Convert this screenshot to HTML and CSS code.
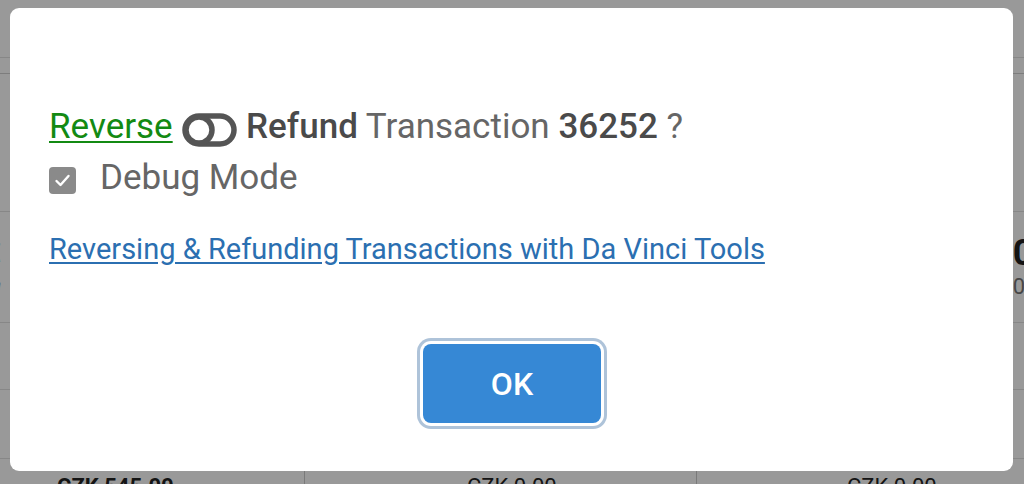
FILE: index.html
```html
<!DOCTYPE html>
<html lang="en">
<head>
<meta charset="utf-8">
<title>Reverse Transaction</title>
<link rel="stylesheet" href="styles.css">
</head>
<body>
<div class="page">
  <div class="topbar"></div>
  <div class="subbar"></div>
  <div class="row row-a"></div>
  <div class="row row-b">
    <div class="cell-left"><span class="cur">€</span><span class="note">ta</span></div>
    <div class="cell-right"><span class="big">00</span><span class="small">00</span></div>
  </div>
  <div class="row row-c"><div class="cell-right"><span class="small">0%</span></div></div>
  <div class="row row-d"><div class="cell-right"><span class="small">0%</span></div></div>
  <div class="row row-e">
    <div class="tcol">CZK 545.00 <span class="arr">▲</span></div>
    <div class="tcol">CZK 0.00 <span class="arr">▲</span></div>
    <div class="tcol">CZK 0.00 <span class="arr">▲</span></div>
  </div>
</div>
<div class="overlay"></div>
<div class="modal" role="dialog">
  <div class="modal-body">
    <p class="title"><a class="rev-link" href="#">Reverse</a> <svg class="toggle" width="55" height="34" viewBox="0 0 55 34" aria-hidden="true"><rect x="3" y="3" width="49" height="28" rx="14" fill="none" stroke="#555" stroke-width="5.5"/><circle cx="17" cy="17" r="13" fill="none" stroke="#555" stroke-width="5.5"/></svg> <b class="strong">Refund</b> Transaction <b class="strong">36252</b> ?</p>
    <label class="debug">
      <span class="checkbox"><svg width="27" height="27" viewBox="0 0 27 27" aria-hidden="true"><path d="M7.5 14l4 4 8-9" fill="none" stroke="#fff" stroke-width="2.4" stroke-linecap="round" stroke-linejoin="round"/></svg></span>
      <span class="debug-text">Debug Mode</span>
    </label>
    <p class="help"><a href="#" class="help-link">Reversing &amp; Refunding Transactions with Da Vinci Tools</a></p>
  </div>
  <div class="modal-footer">
    <button class="ok" type="button">OK</button>
  </div>
</div>
</body>
</html>
```

FILE: styles.css
```css
html, body {
  margin: 0;
  padding: 0;
}
body {
  width: 1024px;
  height: 484px;
  overflow: hidden;
  background: #fff;
  font-family: Roboto, "Liberation Sans", sans-serif;
}

/* background page */
.page {
  width: 1024px;
}
.topbar {
  height: 57px;
  border-bottom: 1px solid #e2e2e2;
}
.subbar {
  height: 15px;
  border-bottom: 1px solid #d0d0d0;
}
.row {
  border-bottom: 1px solid #e2e2e2;
  display: flex;
  justify-content: space-between;
}
.row-a { height: 137px; }
.row-b { height: 110px; }
.row-c { height: 66px; }
.row-d { height: 68px; }
.row-e { height: 40px; border-bottom: 0; }
.cell-left {
  display: flex;
  flex-direction: column;
  margin-left: -14px;
  padding-top: 26px;
}
.cur { font-size: 26px; font-weight: 700; color: #333; }
.note { font-size: 18px; font-style: italic; color: #777; margin-top: 6px; }
.cell-right {
  display: flex;
  flex-direction: column;
  align-items: flex-start;
  margin-left: auto;
  margin-right: -30px;
  padding-top: 20px;
}
.big { font-size: 36px; font-weight: 700; color: #222; }
.small { font-size: 22px; color: #777; }
.row-e {
  display: grid;
  grid-template-columns: 305px 392px 1fr;
}
.tcol {
  padding: 15px 0 0 57px;
  font-weight: 700;
  font-size: 22px;
  color: #222;
  border-right: 1px solid #ccc;
}
.tcol:nth-child(2), .tcol:nth-child(3) { font-weight: 400; padding-left: 162px; }
.tcol:nth-child(3) { padding-left: 150px; border-right: 0; }
.arr { font-size: 10px; color: #666; margin-left: 30px; }

.overlay {
  position: fixed;
  inset: 0;
  background: rgba(0, 0, 0, 0.4);
}

/* modal */
.modal {
  position: fixed;
  left: 10px;
  top: 8px;
  width: 1003px;
  height: 463px;
  box-sizing: border-box;
  background: #fff;
  border-radius: 9px;
  padding: 94px 39px 0;
  display: flex;
  flex-direction: column;
}
.modal-body {
  color: #666;
}
.title {
  margin: 0;
  font-size: 35px;
  line-height: 50px;
  height: 50px;
  white-space: nowrap;
  color: #666;
}
.rev-link {
  color: #138a13;
  text-decoration: underline;
  text-decoration-thickness: 2px;
  text-underline-offset: 3px;
}
.toggle {
  vertical-align: middle;
  margin: 0 0 0 1px;
  position: relative;
  top: 1px;
}
.strong {
  font-weight: 500;
  color: #4a4a4a;
}
.debug {
  display: flex;
  align-items: center;
  height: 50px;
}
.checkbox {
  width: 27px;
  height: 27px;
  border-radius: 4px;
  background: #8a8a8a;
  margin-top: 6px;
  display: flex;
}
.debug-text {
  font-size: 35px;
  color: #666;
  margin-left: 24px;
}
.help {
  margin: 27px 0 0;
  font-size: 29px;
  line-height: 40px;
}
.help-link {
  color: #2b6fb1;
  text-decoration: underline;
  text-underline-offset: 3px;
}
.modal-footer {
  display: flex;
  justify-content: center;
  margin-top: 75px;
}
.ok {
  width: 178px;
  height: 79px;
  border: 0;
  border-radius: 8px;
  background: #3688d5;
  color: #fff;
  font-family: Roboto, "Liberation Sans", sans-serif;
  font-size: 32px;
  font-weight: 500;
  box-shadow: 0 0 0 3px #fff, 0 0 0 6px #aec3d9;
  margin-left: 1px;
}
```
